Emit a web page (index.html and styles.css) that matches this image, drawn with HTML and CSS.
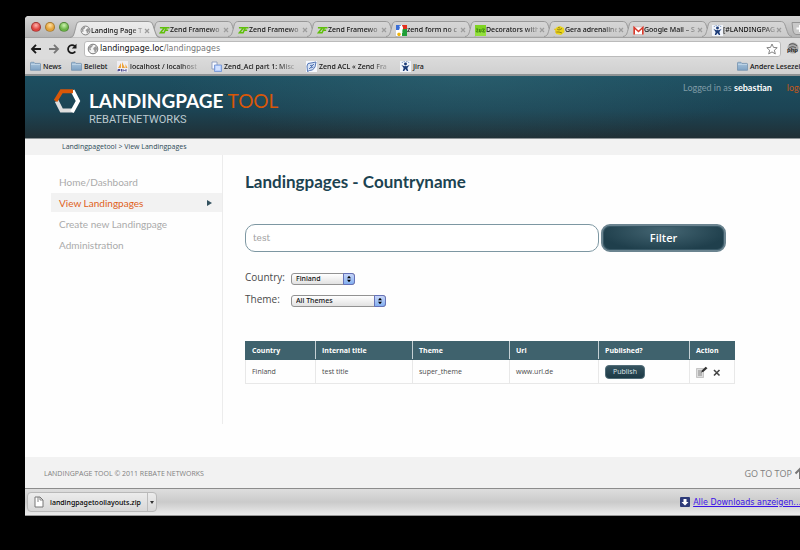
FILE: index.html
```html
<!DOCTYPE html>
<html lang="en">
<head>
<meta charset="utf-8">
<title>Landing Page Tool</title>
<link rel="stylesheet" href="styles.css">
</head>
<body>
<svg class="defs" aria-hidden="true">
  <defs>
    <linearGradient id="tabFill" x1="0" y1="0" x2="0" y2="1"><stop offset="0" stop-color="#d6d6d6"/><stop offset="1" stop-color="#cbcbcb"/></linearGradient>
    <linearGradient id="tabActive" x1="0" y1="0" x2="0" y2="1"><stop offset="0" stop-color="#ececec"/><stop offset="1" stop-color="#e2e2e2"/></linearGradient>
    <linearGradient id="folderFill" x1="0" y1="0" x2="0" y2="1"><stop offset="0" stop-color="#a9c4dc"/><stop offset="1" stop-color="#7fa3c4"/></linearGradient>
    <symbol id="tab" viewBox="0 0 90 16" preserveAspectRatio="none"><path d="M0 15.5C4 15 4 12 5.500 7C6.500 2 7 .5 11 .5H78C82 .5 82.500 2 84 7C86 12 86 15 90 15.500"/></symbol>
    <symbol id="zf" viewBox="0 0 12 10"><path d="M1 2H6L1.500 7.500H5.500L8 2H11.500M7.500 4.700H10" fill="none" stroke="#5fbf0b" stroke-width="1.700"/></symbol>
    <symbol id="folder" viewBox="0 0 11 10"><path d="M.5 1.500Q.5.800 1.200.800H4L5 1.900H9.800Q10.500 1.900 10.500 2.600V8.800H.5Z" fill="url(#folderFill)" stroke="#6d8cab" stroke-width=".7"/><path d="M1 3H10" stroke="#c9dcec" stroke-width=".7"/></symbol>
    <symbol id="globe" viewBox="0 0 12 12"><circle cx="6" cy="6" r="4.800" fill="#f4f4f4" stroke="#777"/><path d="M2 4Q4 1.500 6 2L5 4L3.500 5L4 7L2.500 7.500ZM7 4.500L9 3L10.300 5.500L9 8.500L7.500 9.500L7.200 7L6 6Z" fill="#999"/></symbol>
    <symbol id="jira" viewBox="0 0 12 12"><rect width="12" height="12" fill="#f1f4fa"/><circle cx="6" cy="3.200" r="1.600" fill="#1c3c78"/><path d="M1.500 4Q4 6 6 5.500Q8 6 10.500 4L8 7.500L9 11H7.500L6 8.700L4.500 11H3L4 7.500Z" fill="#1c3c78"/><path d="M2 1.500h1M9 1.500h1M4 .6h1M7 .6h1" stroke="#5577ad"/></symbol>
    <symbol id="x" viewBox="0 0 6 6"><path d="M1 1L5 5M5 1L1 5" stroke="#9c9c9c" stroke-width="1.200"/></symbol>
  </defs>
</svg>

<div class="window">
  <header class="tabstrip">
    <div class="lights"><span class="light red"></span><span class="light yellow"></span><span class="light green"></span></div>
    <div class="tab active"><svg class="shape"><use href="#tab"/></svg><svg class="icon"><use href="#globe"/></svg><span class="title">Landing Page T</span><svg class="close"><use href="#x"/></svg></div>
    <div class="tab"><svg class="shape"><use href="#tab"/></svg><svg class="icon"><use href="#zf"/></svg><span class="title">Zend Framewo</span><svg class="close"><use href="#x"/></svg></div>
    <div class="tab"><svg class="shape"><use href="#tab"/></svg><svg class="icon"><use href="#zf"/></svg><span class="title">Zend Framewo</span><svg class="close"><use href="#x"/></svg></div>
    <div class="tab"><svg class="shape"><use href="#tab"/></svg><svg class="icon"><use href="#zf"/></svg><span class="title">Zend Framewo</span><svg class="close"><use href="#x"/></svg></div>
    <div class="tab"><svg class="shape"><use href="#tab"/></svg><svg class="icon" viewBox="0 0 11 11"><rect width="11" height="11" fill="#fff"/><path d="M0 0H5L3 5H0Z" fill="#3b6fd6"/><path d="M6 0H11V4H7Z" fill="#e3301f"/><path d="M6 4H11V11H6Z" fill="#1f9e38"/><path d="M1 9Q3 6 5 9L4 11H2Z" fill="#f2b50c"/><path d="M3.500 1.500Q7 1.500 6 4T6 8" stroke="#fff" stroke-width="1.500" fill="none"/></svg><span class="title">zend form no c</span><svg class="close"><use href="#x"/></svg></div>
    <div class="tab"><svg class="shape"><use href="#tab"/></svg><svg class="icon" viewBox="0 0 11 11"><rect width="11" height="11" fill="#7ed321"/><rect y="7" width="11" height="4" fill="#93e03c"/><path d="M1 4H3L1.500 7H3.500M4.500 4V7H6V4M7 4H9.500L7.500 7H10" fill="none" stroke="#3d8510" stroke-width=".9"/></svg><span class="title">Decorators with</span><svg class="close"><use href="#x"/></svg></div>
    <div class="tab"><svg class="shape"><use href="#tab"/></svg><svg class="icon" viewBox="0 0 11 11"><path d="M1 4L3 2L6 1L10 3L10.500 7L7 10L2 9Z" fill="#ead51b"/><path d="M3 4L5 5L8 3.500M2 7H5L8 8M4 2.500L6 3" stroke="#8c7b16" stroke-width=".9" fill="none"/><path d="M0 4L2 5M1 7H3" stroke="#e6b81c"/></svg><span class="title">Gera adrenaline</span><svg class="close"><use href="#x"/></svg></div>
    <div class="tab"><svg class="shape"><use href="#tab"/></svg><svg class="icon" viewBox="0 0 11 11"><rect x=".5" y="2" width="10" height="7.500" fill="#fff" stroke="#c99" stroke-width=".5"/><path d="M1.200 9.500V2.500L5.500 6.500L9.800 2.500V9.500" fill="none" stroke="#d93a2b" stroke-width="1.600"/></svg><span class="title">Google Mail – S</span><svg class="close"><use href="#x"/></svg></div>
    <div class="tab"><svg class="shape"><use href="#tab"/></svg><svg class="icon"><use href="#jira"/></svg><span class="title">[#LANDINGPAG</span><svg class="close"><use href="#x"/></svg></div>
    <button class="newtab" aria-label="New tab"><svg viewBox="0 0 22 13"><path d="M1 .5H17Q19 .5 20 4L21.500 12.500H5Q3 12.500 2 9Z" fill="#c9c9c9" stroke="#949494"/><path d="M9 3V10M5.500 6.500H12.500" stroke="#fff" stroke-width="2"/></svg></button>
  </header>

  <div class="toolbar">
    <button class="nav" aria-label="Back"><svg viewBox="0 0 12 12"><path d="M11 6H2.500M6 1.800L2 6L6 10.200" fill="none" stroke="#1a1a1a" stroke-width="1.900"/></svg></button>
    <button class="nav" aria-label="Forward"><svg viewBox="0 0 12 12"><path d="M1 6H9.500M6 1.800L10 6L6 10.200" fill="none" stroke="#777" stroke-width="1.900"/></svg></button>
    <button class="nav" aria-label="Reload"><svg viewBox="0 0 12 12"><path d="M9.300 8.500A4 4 0 1 1 8.800 3.200" fill="none" stroke="#1a1a1a" stroke-width="1.800"/><path d="M10.500 .7V5.500H5.800Z" fill="#1a1a1a"/></svg></button>
    <div class="address"><svg class="globe"><use href="#globe"/></svg><span class="url">landingpage.loc<span class="path">/landingpages</span></span><svg class="star" viewBox="0 0 12 12"><path d="M6 1L7.500 4.400L11.200 4.700L8.400 7.200L9.300 10.900L6 8.900L2.700 10.900L3.600 7.200L.8 4.700L4.500 4.400Z" fill="#fff" stroke="#777" stroke-width=".9"/></svg></div>
    <svg class="php" viewBox="0 0 14 14"><circle cx="7" cy="6" r="5.500" fill="#aaa"/><path d="M3 3Q7 0 11 4M2 7Q6 3 10 6" stroke="#555" fill="none"/><text x="1" y="10">php</text></svg>
  </div>

  <nav class="bookmarks">
    <a href="#" class="bm-news"><svg><use href="#folder"/></svg>News</a>
    <a href="#" class="bm-beliebt"><svg><use href="#folder"/></svg>Beliebt</a>
    <a href="#" class="bm-local"><svg viewBox="0 0 11 11"><rect width="11" height="11" fill="#efeef2"/><path d="M1 7L4 2V7ZM5 7V1L8 7ZM8.500 7V3L10.500 7Z" fill="#eda33b"/><path d="M1 10.500V8.500H3V9.500H1M4.500 8V10.500M6 10.500V8.500L7.500 10L9 8.500V10.500" fill="none" stroke="#514f92"/></svg><span>localhost / localhost</span></a>
    <a href="#" class="bm-acl"><svg viewBox="0 0 11 11"><path d="M1 1H6V8H1Z" fill="#f7f9ff" stroke="#8092b8" stroke-width=".8"/><path d="M3.500 4H10.500V10.500H3.500Z" fill="#b5ceff" stroke="#6d8fd0" stroke-width=".8"/><path d="M5 6H9M5 8H9" stroke="#eef4ff"/></svg><span>Zend_Acl part 1: Misc</span></a>
    <a href="#" class="bm-zend"><svg viewBox="0 0 11 11"><rect width="11" height="11" fill="#f5f8fd"/><path d="M1 5Q1 1.500 5 2L10 1L9 6Q7 10 3.500 9.500L1.500 10.500Z" fill="#d8e4f6" stroke="#5577b5"/><path d="M3 8L8 3M4 4.500L7 4.200M4.500 7L7.500 6" stroke="#5577b5"/></svg><span>Zend ACL « Zend Fra</span></a>
    <a href="#" class="bm-jira"><svg><use href="#jira"/></svg>Jira</a>
    <a href="#" class="bm-other"><svg><use href="#folder"/></svg>Andere Lesezeichen</a>
  </nav>

  <div class="banner">
    <a href="#" class="brand">
      <svg viewBox="0 0 28 26"><path d="M3.700 13L8.500 22.500H20" fill="none" stroke="#dedede" stroke-width="4"/><path d="M19 24L25 13L19.500 2.500" fill="none" stroke="#fff" stroke-width="4"/><path d="M2.500 13L8.500 3.200H20" fill="none" stroke="#d95708" stroke-width="4"/></svg>
      <span class="words"><span class="name"><strong>LANDINGPAGE</strong> <span class="tool">TOOL</span></span><span class="sub">REBATENETWORKS</span></span>
    </a>
    <p class="user">Logged in as <strong>sebastian</strong><a href="#">logout</a></p>
  </div>

  <div class="crumbs">Landingpagetool &gt; View Landingpages</div>

  <div class="body">
    <nav class="side">
      <a href="#">Home/Dashboard</a>
      <a href="#" class="current">View Landingpages<svg viewBox="0 0 5 6"><path d="M0 0L5 3L0 6Z"/></svg></a>
      <a href="#">Create new Landingpage</a>
      <a href="#">Administration</a>
    </nav>
    <main>
      <h1>Landingpages - Countryname</h1>
      <form>
        <div class="search"><input type="text" aria-label="Search" value="test"><button type="button">Filter</button></div>
        <div class="field"><label for="country">Country:</label><span class="pick"><select id="country"><option>Finland</option></select><svg viewBox="0 0 10 10"><path d="M5 1L7.500 4H2.500ZM5 9L7.500 6H2.500Z"/></svg></span></div>
        <div class="field"><label for="theme">Theme:</label><span class="pick wide"><select id="theme"><option>All Themes</option></select><svg viewBox="0 0 10 10"><path d="M5 1L7.500 4H2.500ZM5 9L7.500 6H2.500Z"/></svg></span></div>
      </form>
      <table>
        <colgroup><col class="c-country"><col class="c-title"><col class="c-theme"><col class="c-url"><col class="c-pub"><col class="c-act"></colgroup>
        <thead><tr><th>Country</th><th>Internal title</th><th>Theme</th><th>Url</th><th>Published?</th><th>Action</th></tr></thead>
        <tbody><tr><td>Finland</td><td>test title</td><td>super_theme</td><td>www.url.de</td><td><button type="button" class="publish">Publish</button></td>
          <td><div class="actions"><button type="button" aria-label="Edit"><svg viewBox="0 0 12 12"><path d="M.5 2.500H7.500V11.500H.5Z" fill="#ddd" stroke="#aaa" stroke-width=".6"/><path d="M2 5H5M2 7H6M2 9H6" stroke="#777" stroke-width=".8"/><path d="M5 6.500L6 4.300L9.700 .7L11.500 2.300L7.500 5.800Z" fill="#333"/></svg></button><button type="button" aria-label="Delete"><svg viewBox="0 0 12 12"><path d="M3 4L8.500 9.500M8.500 4L3 9.500" stroke="#444" stroke-width="1.600"/></svg></button></div></td></tr></tbody>
      </table>
    </main>
  </div>

  <footer class="foot"><span>LANDINGPAGE TOOL © 2011 REBATE NETWORKS</span><a href="#">GO TO TOP<svg viewBox="0 0 12 12"><path d="M6 12V2M1.500 6.500L6 2L10.500 6.500" fill="none" stroke="#777" stroke-width="2"/></svg></a></footer>

  <div class="downloads">
    <div class="file"><button type="button" class="open"><svg viewBox="0 0 10 12"><path d="M1 1H6L9 4V11H1Z" fill="#fff" stroke="#777"/><path d="M6 1V4H9M4 1V6" fill="none" stroke="#777" stroke-width=".9"/></svg>landingpagetoollayouts.zip</button><button type="button" class="more" aria-label="More"><svg viewBox="0 0 4 3"><path d="M0 0H4L2 3Z" fill="#333"/></svg></button></div>
    <a href="#"><svg viewBox="0 0 10 10"><rect width="10" height="10" rx="1" fill="#2d3a78"/><path d="M3.500 2H6.500V5H8.500L5 8.500L1.500 5H3.500Z" fill="#fff"/></svg><span>Alle Downloads anzeigen...</span></a>
  </div>
</div>
</body>
</html>
```

FILE: styles.css
```css
* { box-sizing: border-box; }
html { height: 100%; }
body {
  margin: 0;
  min-height: 100%;
  padding: 16px 0 34px 25px;
  background: #000;
  display: flex;
  overflow: hidden;
  font-family: "Open Sans", "Noto Sans", sans-serif;
}
button { font: inherit; border: 0; background: none; padding: 0; }
a { text-decoration: none; color: inherit; }
svg { display: block; flex: none; }
.defs { position: absolute; width: 0; height: 0; }
.window {
  flex: 1;
  min-width: 0;
  margin-right: -24px;
  display: flex;
  flex-direction: column;
  background: #fefefe;
  border-radius: 4px 0 0 0;
  overflow: hidden;
}

/* Browser tabs */
.tabstrip {
  height: 22px;
  flex: none;
  display: flex;
  align-items: flex-end;
  background: linear-gradient(#d3d3d3, #b4b4b4);
  border-bottom: 1px solid #a2a2a2;
  font: 500 7px "Noto Sans", sans-serif;
  color: #111;
}
.lights { flex: none; width: 50px; padding: 0 0 5px 6px; display: flex; gap: 4px; }
.light { flex: none; width: 10px; height: 10px; border-radius: 50%; border: 1px solid #0004; }
.red { background: radial-gradient(circle at 50% 30%, #ffb3ad, #de4440 60%); }
.yellow { background: radial-gradient(circle at 50% 30%, #ffe0a0, #e3a23a 60%); }
.green { background: radial-gradient(circle at 50% 30%, #cdf3b0, #6bb547 60%); }
.tab {
  position: relative;
  flex: none;
  width: 79px;
  height: 16px;
  padding: 2px 4px 0 5px;
  display: flex;
  align-items: center;
  z-index: 0;
}
.shape {
  position: absolute;
  z-index: -1;
  left: -5px;
  top: 0;
  width: 90px;
  height: 16px;
  fill: url(#tabFill);
  stroke: #989898;
}
.active { z-index: 1; margin-bottom: -1px; height: 17px; }
.active .shape { height: 17px; fill: url(#tabActive); }
.tab .icon { width: 11px; height: 11px; }
.title {
  flex: 1;
  min-width: 0;
  margin-right: 1px;
  overflow: hidden;
  white-space: nowrap;
  line-height: 12px;
  mask-image: linear-gradient(90deg, #000 75%, #0003);
}
.close { width: 6px; height: 6px; }
.newtab { margin-left: 5px; margin-bottom: 2px; }
.newtab svg { width: 22px; height: 13px; }

/* Address bar */
.toolbar {
  height: 21px;
  flex: none;
  display: flex;
  align-items: center;
  padding: 0 10px 0 5px;
  background: #dcdcdc;
}
.nav { width: 12px; margin-right: 6px; }
.nav svg { width: 12px; height: 12px; }
.address {
  flex: 1;
  height: 16px;
  margin-right: 5px;
  padding: 0 2px;
  display: flex;
  align-items: center;
  background: #fff;
  border: 1px solid #bbb;
  border-radius: 3px;
  font: 8px "DejaVu Sans", sans-serif;
  color: #111;
}
.globe, .star { width: 12px; height: 12px; }
.url { flex: 1; margin-left: 1px; line-height: 14px; }
.path { color: #777; }
.php { width: 14px; height: 14px; margin-right: 14px; }
.php text { font: bold 6px "Liberation Sans", sans-serif; fill: #222; }

/* Bookmarks */
.bookmarks {
  height: 17px;
  flex: none;
  display: flex;
  align-items: center;
  padding-left: 5px;
  background: linear-gradient(#dadada, #d0d0d0);
  border-bottom: 2px solid #8f9394;
  font: 500 7px "Noto Sans", sans-serif;
  color: #111;
}
.bookmarks a { flex: none; display: flex; align-items: center; gap: 2px; white-space: nowrap; }
.bookmarks svg { width: 11px; height: 11px; }
.bookmarks a > span { mask-image: linear-gradient(90deg, #000 75%, #0003); }
.bm-news { width: 41px; }
.bm-beliebt { width: 46px; }
.bm-local { width: 82px; margin-right: 12px; }
.bm-acl { width: 84px; margin-right: 11px; }
.bm-zend { width: 84px; margin-right: 10px; }
.bookmarks .bm-other { margin-left: auto; width: 87px; }

/* Site banner */
.banner {
  height: 63px;
  flex: none;
  display: flex;
  justify-content: space-between;
  align-items: flex-start;
  padding: 5px 12px 0 28px;
  background:
    radial-gradient(ellipse 300px 70px at 55% 0, #39707c66, transparent),
    linear-gradient(#1d4f61, #1c4454 55%, #202f35);
  border-bottom: 1px solid #8c9396;
  font-family: Lato, sans-serif;
}
.brand { display: flex; padding-top: 7px; gap: 8px; }
.brand > svg { width: 28px; height: 26px; }
.words { display: flex; flex-direction: column; }
.name { font-size: 19px; line-height: 26px; color: #d95708; white-space: nowrap; display: flex; gap: 4px; }
.name strong { color: #fff; }
.sub { font: 11px/12px Roboto, sans-serif; color: #bccad0; }
.user { margin: 0; font-size: 9px; line-height: 14px; color: #7f9ba6; white-space: nowrap; }
.user strong { color: #fff; }
.user a { margin-left: 15px; color: #c5581b; }

.crumbs {
  height: 16px;
  flex: none;
  padding-left: 37px;
  background: #f2f2f2;
  color: #2d4b57;
  font-size: 7px;
  line-height: 16px;
}

/* Page body */
.body { flex: 1; display: flex; align-items: flex-start; }
.side {
  width: 198px;
  min-height: 269px;
  flex: none;
  padding: 17px 0 0 26px;
  display: flex;
  flex-direction: column;
  border-right: 1px solid #ececec;
  font: 10px Lato, sans-serif;
  color: #aaa;
}
.side a {
  display: flex;
  align-items: center;
  justify-content: space-between;
  height: 19px;
  margin-bottom: 2px;
  padding: 0 10px 0 8px;
}
.side .current { background: #f2f2f2; color: #e0601a; }
.side svg { width: 5px; height: 6px; fill: #33525f; }
main { flex: 1; padding: 15px 24px 0 22px; color: #4a4a4a; }
h1 { margin: 0 0 30px; font: bold 17px/24px Lato, sans-serif; color: #1c4351; }
.search { display: flex; gap: 2px; margin-bottom: 17px; }
.search input {
  flex: 0 1 354px;
  min-width: 0;
  height: 28px;
  padding: 0 7px;
  border: 1px solid #7d97a2;
  border-radius: 10px;
  background: #fff;
  color: #a0a0a0;
  font: 9px "DejaVu Serif", serif;
}
.search button {
  width: 125px;
  height: 28px;
  border: 2px solid #6b8490;
  border-radius: 9px;
  background: radial-gradient(ellipse at 50% 20%, #456673, #1f3f4c 75%);
  box-shadow: inset 0 0 0 1px #375765;
  color: #fff;
  font-weight: 600;
  font-size: 11px;
  line-height: 22px;
}
.field { display: flex; align-items: center; height: 16px; margin-bottom: 6px; }
.field label { width: 46px; font-size: 10px; }
.pick { position: relative; width: 64px; height: 12px; margin-top: 3px; }
.pick.wide { width: 95px; }
.pick select {
  appearance: none;
  display: block;
  width: 100%;
  height: 12px;
  padding: 0 12px 0 4px;
  border: 1px solid #929292;
  border-radius: 3px;
  background: linear-gradient(#fff, #e2e2e2);
  color: #111;
  font: 500 7px "Noto Sans", sans-serif;
}
.pick svg {
  position: absolute;
  right: 0;
  top: 0;
  width: 12px;
  height: 12px;
  padding: 1px;
  border: 1px solid #6672b8;
  border-radius: 0 3px 3px 0;
  background: linear-gradient(#c7d5f8, #83b0f0);
  pointer-events: none;
}
table {
  width: 490px;
  margin-top: 34px;
  table-layout: fixed;
  border-collapse: collapse;
  font-size: 7px;
}
.c-country { width: 70px; }
.c-title, .c-theme { width: 97px; }
.c-url { width: 89px; }
.c-pub { width: 91px; }
th, td { padding: 0 6px; text-align: left; line-height: 10px; }
th { height: 18px; background: #3f626d; color: #fff; border: 1px solid #3f626d; border-right-color: #c5d0d4; }
th:last-child { border-right-color: #3f626d; }
td { height: 24px; border: 1px solid #e8e8e8; }
.publish {
  display: block;
  width: 40px;
  height: 14px;
  border: 1px solid #526d78;
  border-radius: 4px;
  background: linear-gradient(#35535f, #1c3945);
  color: #dfe6e9;
}
.actions { display: flex; gap: 3px; }
.actions svg { width: 12px; height: 12px; }

.foot {
  height: 31px;
  flex: none;
  display: flex;
  justify-content: space-between;
  align-items: center;
  padding: 1px 18px 0 19px;
  background: #f2f2f2;
  color: #808080;
  font-size: 7px;
}
.foot a { display: flex; align-items: center; gap: 2px; font-size: 9px; }
.foot svg { width: 12px; height: 12px; }

/* Download shelf */
.downloads {
  height: 28px;
  flex: none;
  display: flex;
  align-items: center;
  justify-content: space-between;
  padding: 0 23px 0 2px;
  border-top: 1px solid #8c8c8c;
  border-bottom: 1px solid #999;
  background: linear-gradient(#dedede, #cacaca 50%, #ececec);
  font: 500 8px "Noto Sans", sans-serif;
  color: #222;
}
.file {
  display: flex;
  height: 20px;
  border: 1px solid #b9b9b9;
  border-radius: 4px;
  background: linear-gradient(#ececec, #d8d8d8);
  font-size: 7px;
}
.open { display: flex; align-items: center; gap: 6px; padding: 0 6px; }
.open svg { width: 10px; height: 12px; }
.more { width: 9px; padding: 0 2px; border-left: 1px solid #bcbcbc; }
.more svg { width: 4px; height: 3px; }
.downloads > a { display: flex; align-items: center; gap: 3px; color: #3b12e8; font-family: "DejaVu Sans", sans-serif; }
.downloads > a span { text-decoration: underline; }
.downloads > a svg { width: 10px; height: 10px; }
```
